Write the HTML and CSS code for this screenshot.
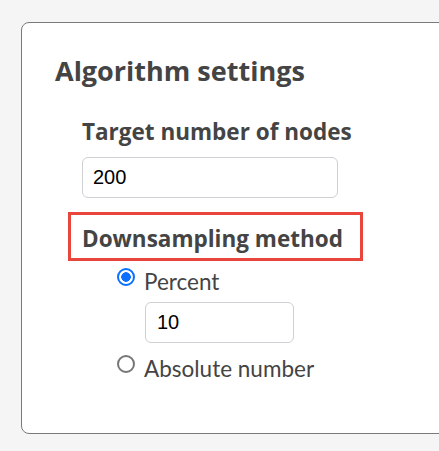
FILE: index.html
```html
<!DOCTYPE html>
<html>
<head>
<meta charset="utf-8">
<link rel="stylesheet" href="styles.css">
</head>
<body>
<div class="card">
  <h2 class="title">Algorithm settings</h2>
  <div class="group">
    <label class="label label-tight" for="nodes">Target number of nodes</label>
    <input class="field field-wide" id="nodes" type="text" value="200">
  </div>
  <div class="highlight">
    <span class="label">Downsampling method</span>
  </div>
  <div class="options">
    <label class="option">
      <span class="radio checked"></span>
      <span class="option-text">Percent</span>
    </label>
    <input class="field field-narrow" type="text" value="10">
    <label class="option option-second">
      <span class="radio"></span>
      <span class="option-text">Absolute number</span>
    </label>
  </div>
</div>
</body>
</html>
```

FILE: styles.css
```css
html, body {
  margin: 0;
  padding: 0;
  background: #f5f5f5;
  overflow: hidden;
}
body {
  width: 439px;
  height: 451px;
}
.card {
  box-sizing: border-box;
  margin: 22px 0 0 21px;
  width: 480px;
  height: 412px;
  border: 1px solid #7a7a7a;
  border-radius: 8px;
  background: #fff;
  padding: 32px 0 0 33px;
  color: #444;
}
.title {
  margin: 0;
  font-family: "Open Sans", sans-serif;
  font-weight: 700;
  font-size: 27px;
  line-height: 32px;
  height: 32px;
  color: #444;
}
.group {
  display: flex;
  flex-direction: column;
  align-items: flex-start;
  padding-left: 27px;
  margin-top: 31px;
}
.label {
  font-family: "Open Sans", sans-serif;
  font-weight: 700;
  font-size: 22.5px;
  line-height: 27px;
  color: #444;
  display: block;
  white-space: nowrap;
}
.label-tight {
  font-stretch: 88%;
}
.field {
  box-sizing: border-box;
  height: 41px;
  border: 1px solid #cfcfd4;
  border-radius: 6px;
  background: #fff;
  font-family: "Liberation Sans", Arial, sans-serif;
  font-size: 20px;
  color: #000;
  outline: none;
  margin: 0;
}
.field-wide {
  width: 256px;
  margin-top: 12px;
  padding: 0 10px;
}
.highlight {
  box-sizing: border-box;
  margin: 14px 0 0 13px;
  width: 295px;
  height: 49px;
  border: 3px solid #e8453c;
  padding: 10px 0 0 11px;
}
.options {
  display: flex;
  flex-direction: column;
  align-items: flex-start;
  padding-left: 62px;
  margin-top: 7px;
}
.option {
  display: flex;
  align-items: flex-start;
  gap: 9px;
  font-family: Lato, sans-serif;
  font-size: 22.5px;
  line-height: 27px;
  color: #444;
  white-space: nowrap;
}
.option-second {
  margin-top: 12px;
}
.radio {
  box-sizing: border-box;
  width: 18px;
  height: 18px;
  border-radius: 50%;
  border: 2px solid #767676;
  background: #fff;
  margin-top: 0;
  flex: none;
}
.radio.checked {
  border-color: #0b6fff;
  background: radial-gradient(circle, #0b6fff 0 4.5px, #fff 5px);
}
.field-narrow {
  width: 149px;
  margin: 7px 0 0 28px;
  padding: 0 11px;
}
```
